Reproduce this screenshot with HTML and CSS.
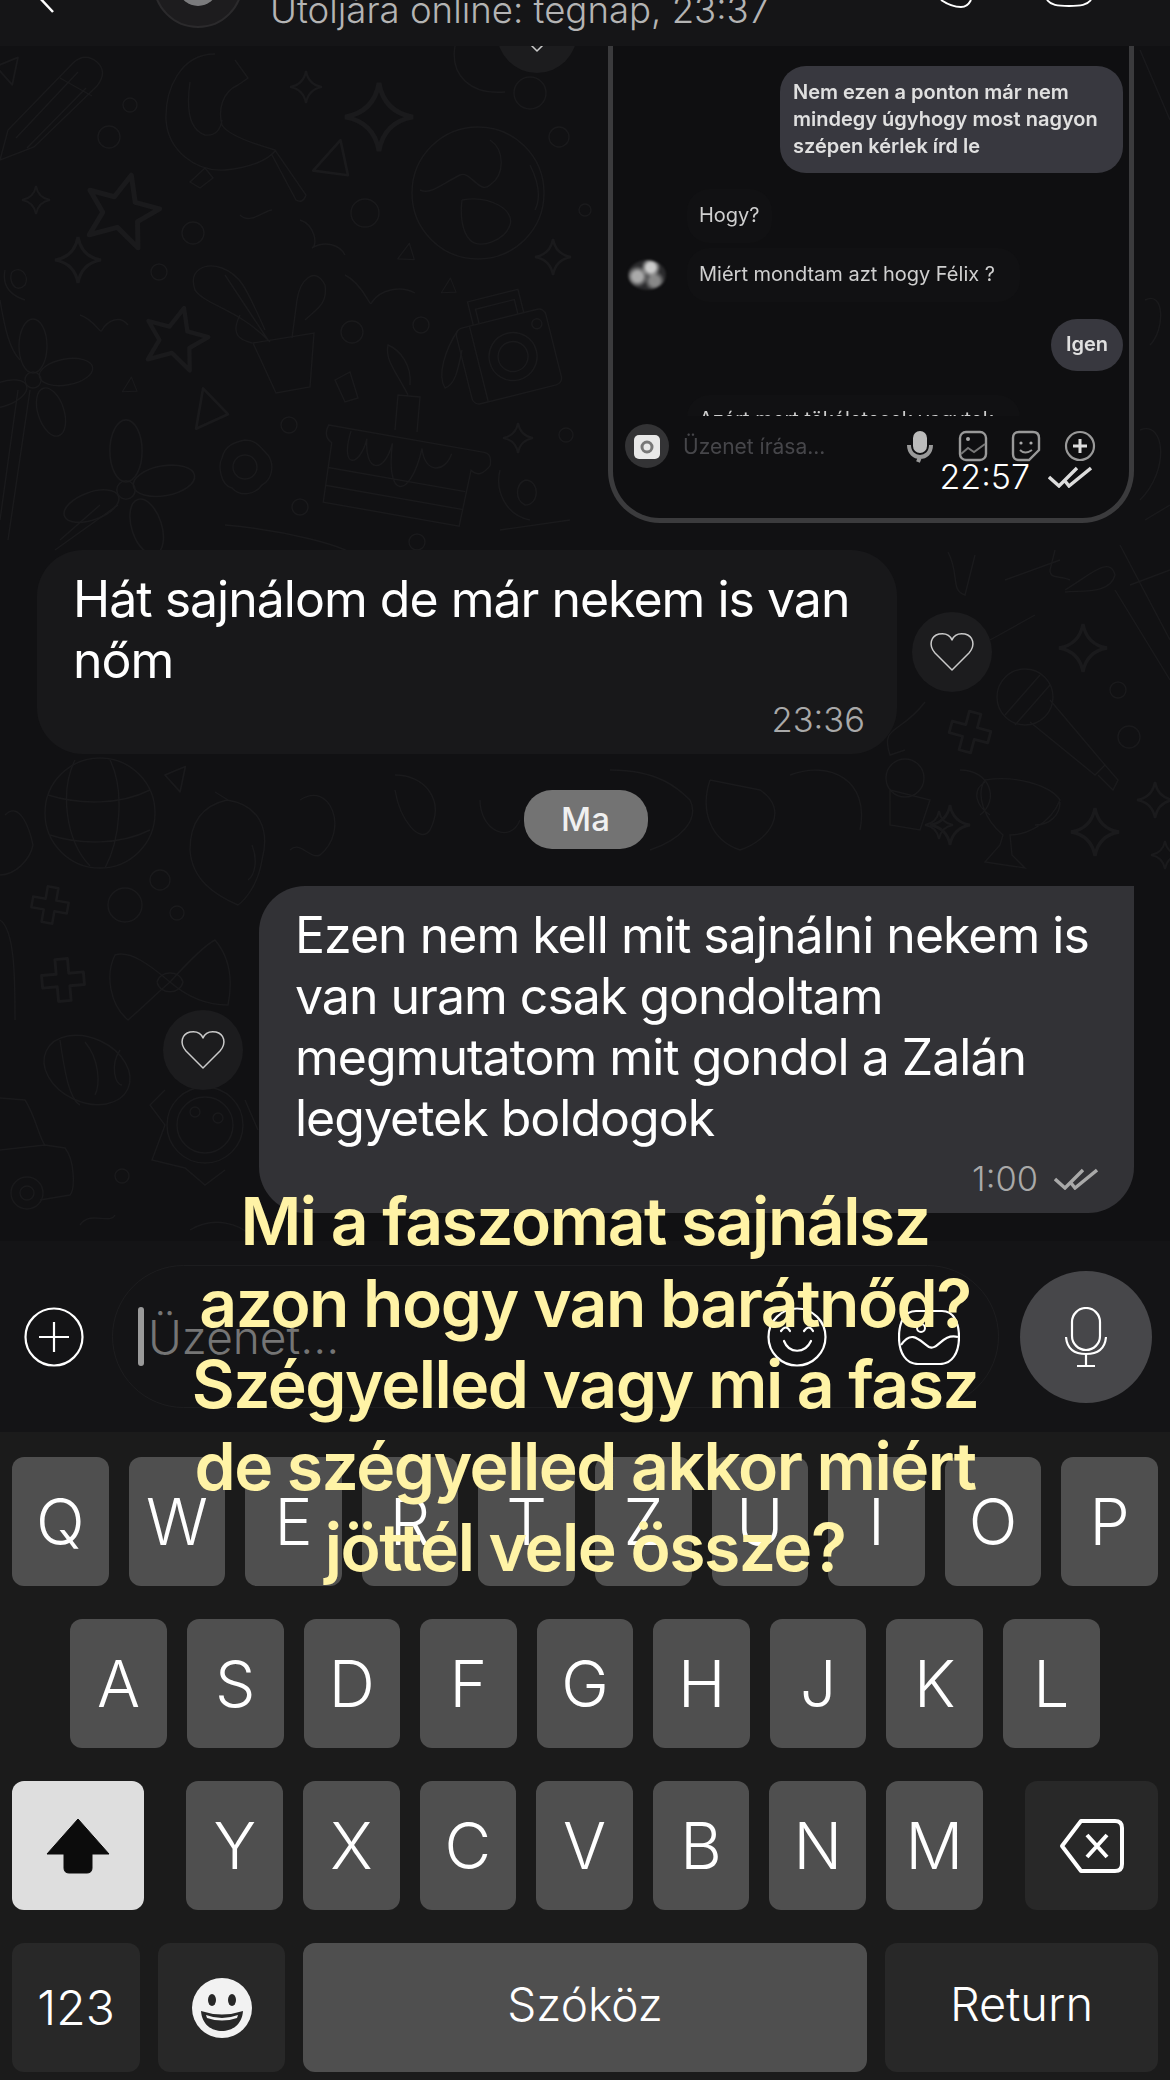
FILE: index.html
```html
<!DOCTYPE html>
<html lang="hu">
<head>
<meta charset="utf-8">
<title>Chat</title>
<link rel="stylesheet" href="styles.css">
</head>
<body>
<svg class="defs" width="0" height="0" aria-hidden="true">
  <symbol id="heart" viewBox="0 0 46 42"><path d="M23 39 L6 22 C-1 14 2 5 10 3 C16 2 21 4 23 9 C25 4 30 2 36 3 C44 5 47 14 40 22 Z" fill="none" stroke="currentColor" stroke-width="1.5" stroke-linejoin="round"/></symbol>
  <symbol id="checks" viewBox="0 0 44 22"><path d="M1 11 L11 20 L29 2 M17 15 L21 20 L43 2" fill="none" stroke="currentColor" stroke-width="3.4"/></symbol>
</svg>
<main class="phone">
  <header class="topbar">
    <svg class="back" width="30" height="14" viewBox="0 0 30 14"><path d="M8 -4 L23 12" fill="none" stroke="#fff" stroke-width="2.5"/></svg>
    <div class="avatar"><span class="avatar-head"></span></div>
    <div class="status">Utoljára online: tegnap, 23:37</div>
    <svg class="top-icon-a" width="36" height="10" viewBox="0 0 36 10"><path d="M2 0 C8 4 14 7 22 7 C27 7 30 4 32 0" fill="none" stroke="#fff" stroke-width="2"/></svg>
    <svg class="top-icon-b" width="48" height="8" viewBox="0 0 48 8"><path d="M2 0 C6 5 12 6 24 6 C36 6 42 5 46 0" fill="none" stroke="#fff" stroke-width="2"/></svg>
  </header>

  <section class="chat">
    <svg class="wallpaper" viewBox="0 46 1170 1195" width="1170" height="1195" aria-hidden="true">
      <defs>
        <path id="sp" d="M0 -10 Q1.5 -1.5 10 0 Q1.5 1.5 0 10 Q-1.5 1.5 -10 0 Q-1.5 -1.5 0 -10 Z"/>
        <path id="st" d="M0 -10 L3 -3 L10 -3 L5 2 L7 9 L0 5 L-7 9 L-5 2 L-10 -3 L-3 -3 Z" stroke-linejoin="round"/>
        <path id="tr" d="M-8 10 L0 -10 L10 6 Z" stroke-linejoin="round"/>
        <path id="pl" d="M-3 -10 L3 -10 L3 -3 L10 -3 L10 3 L3 3 L3 10 L-3 10 L-3 3 L-10 3 L-10 -3 L-3 -3 Z" stroke-linejoin="round"/>
        <g id="pw"><circle r="8"/><ellipse cx="0" cy="-34" rx="14" ry="27"/><ellipse cx="33" cy="-8" rx="27" ry="13" transform="rotate(-10 33 -8)"/><ellipse cx="18" cy="32" rx="13" ry="25" transform="rotate(-18 18 32)"/><ellipse cx="-30" cy="14" rx="25" ry="12" transform="rotate(-20 -30 14)"/></g>
      </defs>
      <g class="doodle">
        <path d="M0 160 L8 130 L73 63 Q85 52 97 62 Q108 72 97 86 L34 147 Z M16 138 L78 72 M60 78 L92 96 M27 148 L86 88"/>
        <path d="M215 54 C180 54 165 90 166 120 C168 150 195 172 225 170 C250 168 268 160 276 150 M235 60 L248 78 L238 85 C222 92 218 110 222 125 C226 132 240 140 275 150 L306 195 Q303 204 296 200 L272 155 M190 82 C186 110 190 130 205 135 C214 136 220 132 222 120"/>
        <path d="M190 182 L205 168 L213 178 L200 188 Z"/>
        <use href="#sp" transform="translate(306 87) scale(1.6)"/><use href="#sp" transform="translate(379 117) scale(3.4)"/><use href="#sp" transform="translate(36 200) scale(1.4)"/><use href="#sp" transform="translate(78 260) scale(2.3)"/><use href="#sp" transform="translate(553 257) scale(1.8)"/><use href="#sp" transform="translate(518 438) scale(1.5)"/>
        <circle cx="130" cy="105" r="7"/><circle cx="109" cy="137" r="11"/><circle cx="193" cy="233" r="11"/><circle cx="365" cy="213" r="14"/><circle cx="530" cy="93" r="16"/><circle cx="559" cy="137" r="10"/><circle cx="585" cy="210" r="6"/><circle cx="159" cy="272" r="8"/><circle cx="352" cy="332" r="11"/><circle cx="421" cy="325" r="8"/><circle cx="289" cy="425" r="8"/><circle cx="566" cy="435" r="7"/><circle cx="300" cy="507" r="8"/><circle cx="417" cy="542" r="8"/>
        <circle cx="478" cy="193" r="66"/>
        <path d="M420 190 C430 195 440 185 460 175 C470 170 480 195 490 185 C505 175 505 150 490 140 M462 200 C490 195 515 210 510 225 C505 240 480 250 470 240 C462 232 460 215 462 200 M530 165 C540 185 540 200 535 210"/>
        <path d="M455 46 C450 75 470 95 505 92"/>
        <use href="#st" transform="translate(122 210) rotate(15) scale(3.6)"/><use href="#st" transform="translate(176 338) rotate(15) scale(3.1)"/>
        <use href="#tr" transform="translate(334 158) rotate(20) scale(1.9)"/><use href="#tr" transform="translate(407 252) rotate(15) scale(.9)"/><use href="#tr" transform="translate(207 407) rotate(-12) scale(1.9)"/><use href="#tr" transform="translate(10 72) rotate(170) scale(1.3)"/><use href="#tr" transform="translate(130 385) rotate(10) scale(.8)"/><use href="#tr" transform="translate(449 286) rotate(10) scale(.8)"/>
        <path d="M253 343 L314 333 L310 387 L276 393 Z M270 342 C240 310 205 305 195 290 C188 270 205 262 222 268 C240 275 245 285 265 330 M292 338 L297 300 C300 280 315 265 325 285 C328 305 315 310 305 320 M225 275 L268 340 M240 315 C230 335 240 340 252 343"/>
        <path d="M240 215 C250 225 265 210 272 210 M300 220 C315 225 318 245 312 248 C325 240 340 245 345 255"/>
        <path d="M345 275 C365 285 370 310 372 302 C380 290 400 285 415 293 M80 315 C95 320 100 335 102 330 C108 320 120 315 128 325"/>
        <g transform="rotate(-14 507 357)"><rect x="463" y="318" width="92" height="78" rx="7"/><circle cx="513" cy="358" r="24"/><circle cx="513" cy="358" r="15"/><path d="M482 318 L482 294 L534 294 L534 318 M488 318 L488 303 L528 303 L528 318 M478 318 L478 396"/><circle cx="544" cy="332" r="5"/></g>
        <path d="M458 330 C445 350 437 375 445 388 C455 385 458 370 462 350"/>
        <use href="#pw" transform="translate(33 380)"/><path d="M30 390 L8 540 M18 390 L0 520"/>
        <use href="#pw" transform="translate(126 490) scale(1.15)"/><path d="M118 505 L55 550 M100 505 L60 540"/>
        <path d="M245 440 C258 440 262 450 268 455 C275 465 272 480 262 485 C255 495 240 497 232 488 C220 485 218 465 222 458 C225 445 235 442 245 440 Z"/><circle cx="245" cy="467" r="12"/>
        <g transform="rotate(10 400 470)"><path d="M322 438 L480 438 Q488 438 488 450 Q480 465 470 458 L468 515 L330 515 L328 455 Q318 450 322 438 Z M329 480 L468 480 M329 498 L468 498 M345 440 C340 480 360 475 362 445 C365 478 385 478 388 445 C390 500 415 500 418 445 C425 470 445 465 448 445"/></g>
        <path d="M395 430 L398 395 L420 397 L417 432 M408 395 C395 370 385 360 388 345 C400 350 412 365 410 385"/>
        <path d="M335 380 L350 372 L358 398 L345 402 Z"/>
        <path d="M500 470 C495 490 505 515 530 520 M525 480 C540 480 540 505 525 505 C515 500 515 485 525 480"/>
        <path d="M225 525 C280 530 350 545 360 560 M500 530 L570 520"/>
        <path d="M5 270 C2 285 10 295 25 300 M12 272 C20 265 30 275 25 285 C15 295 8 280 12 272"/>

        <circle cx="100" cy="813" r="55"/><path d="M48 795 C80 805 120 805 150 790 M50 835 C80 845 120 845 150 830 M75 760 C60 790 65 840 90 866 M110 760 C125 790 120 840 105 868"/>
        <path d="M227 800 C260 805 270 830 262 860 C258 885 245 900 238 905 C215 895 192 880 190 850 C190 820 205 805 227 800 M215 792 L228 800 M252 845 C258 860 255 875 248 880"/>
        <circle cx="125" cy="905" r="17"/><circle cx="160" cy="880" r="10"/><circle cx="177" cy="913" r="7"/>
        <use href="#pl" transform="translate(50 905) rotate(10) scale(1.8)"/><use href="#pl" transform="translate(63 980) rotate(-5) scale(2.1)"/>
        <use href="#tr" transform="translate(178 780) rotate(170) scale(1.2)"/>
        <path d="M170 982 C150 965 130 950 115 955 C105 975 110 1005 128 1020 C145 1005 155 995 170 982 C190 960 205 945 215 940 C232 960 232 985 228 1005 C205 1005 185 995 170 982 M157 982 C160 995 180 995 183 982 C180 970 160 970 157 982"/>
        <path d="M5 815 C20 800 30 830 33 845 C30 860 15 875 0 875 M0 920 C15 930 15 980 15 1020"/>
        <ellipse cx="87" cy="1070" rx="45" ry="32" transform="rotate(25 87 1070)"/><path d="M60 1040 C65 1075 70 1100 80 1105 M85 1042 C100 1060 100 1085 95 1095 M120 1050 C110 1065 115 1085 122 1085"/>
        <circle cx="205" cy="1125" r="38"/><circle cx="205" cy="1125" r="28"/><circle cx="195" cy="1112" r="5"/><circle cx="218" cy="1118" r="5"/><path d="M165 1090 L150 1105 L165 1125 L152 1160 L185 1168 L205 1185 L225 1170 M245 1100 L258 1130"/>
        <path d="M0 1098 L25 1100 C35 1115 40 1140 45 1145 L65 1148 C75 1160 75 1190 70 1195 L40 1200 M0 1150 L45 1145"/><circle cx="27" cy="1193" r="16"/><circle cx="27" cy="1193" r="7"/>
        <circle cx="122" cy="1176" r="7"/>
        <path d="M80 1225 C90 1210 110 1225 115 1215 M190 1230 C215 1215 240 1225 250 1235"/>

        <path d="M300 800 C330 780 350 830 320 855 C310 860 300 840 290 850 M395 775 C425 775 445 800 430 830 C420 845 400 820 395 790 M480 800 C480 830 510 845 520 820"/>
        <path d="M610 770 C660 770 680 790 690 800 C700 820 680 840 650 850 M710 780 L760 790 C790 810 770 840 740 850 C710 840 700 810 710 780 M790 775 C830 760 870 780 860 830 M890 790 L930 800 L920 830 L890 825 Z"/>
        <use href="#sp" transform="translate(950 825) scale(2)"/><path d="M960 770 C990 770 1000 800 980 815"/>

        <path d="M948 552 C960 575 950 590 965 595 L975 555 M1055 550 L1050 570 C1050 580 1060 575 1070 580 M1065 590 C1090 575 1110 555 1115 575 C1110 595 1080 590 1065 592 M1120 545 L1170 640 M1115 590 L1170 680 M1130 585 L1170 570"/>
        <path d="M1005 580 L1060 560 M990 640 L1035 615"/>
        <path d="M925 702 C900 735 880 725 890 755 L905 750"/>
        <use href="#sp" transform="translate(1083 648) scale(2.4)"/><use href="#sp" transform="translate(1095 832) scale(2.4)"/><use href="#sp" transform="translate(939 825) scale(1.4)"/><use href="#sp" transform="translate(1155 800) scale(1.8)"/><use href="#sp" transform="translate(1165 855) scale(1.4)"/>
        <circle cx="1025" cy="697" r="28"/><path d="M1005 715 L1040 675 M1015 725 L1050 685 M1030 722 L1095 775 L1105 765 L1050 700 M1098 775 L1113 790 L1118 780 L1105 765"/>
        <circle cx="1118" cy="690" r="8"/><circle cx="1129" cy="737" r="11"/><circle cx="905" cy="778" r="19"/>
        <use href="#pl" transform="translate(970 732) rotate(15) scale(2)"/>
        <path d="M985 780 C1015 775 1050 785 1060 800 C1050 825 1025 835 1010 835 L1012 855 L1025 868 L985 862 L1000 845 L1003 835 C985 820 975 795 985 780 M985 782 C972 790 975 805 990 815 M1060 802 C1060 815 1050 825 1035 825"/>
        <path d="M1140 50 L1170 120 M1145 300 C1165 290 1165 330 1150 345 M1140 430 C1165 420 1170 470 1140 500 M1145 520 L1170 505"/>
        <path d="M0 300 C5 330 10 350 20 360"/>
      </g>
    </svg>

    <div class="row row-right row-shot">
      <button class="react react-top"><svg width="46" height="42"><use href="#heart"/></svg></button>
      <div class="shot">
        <div class="in-bubble in-out in-long">Nem ezen a ponton már nem mindegy úgyhogy most nagyon szépen kérlek írd le</div>
        <div class="in-row in-first"><div class="in-bubble in-in">Hogy?</div></div>
        <div class="in-row in-second"><span class="in-avatar"></span><div class="in-bubble in-in in-flush">Miért mondtam azt hogy Félix ?</div></div>
        <div class="in-bubble in-out in-short">Igen</div>
        <div class="in-row in-crop"><div class="in-bubble in-in in-cut">Azért mert tökéletesek vagytok</div></div>
        <div class="in-compose">
          <span class="in-camera"><svg width="28" height="28" viewBox="0 0 28 28"><rect x="1" y="3" width="26" height="24" rx="5" fill="#e8e8e8"/><circle cx="14" cy="15" r="5" fill="none" stroke="#777" stroke-width="3"/></svg></span>
          <span class="in-placeholder">Üzenet írása...</span>
          <span class="in-icons">
            <svg width="30" height="34" viewBox="0 0 30 34"><rect x="8" y="2" width="14" height="22" rx="7" fill="#bbb"/><path d="M4 16 C4 32 26 32 26 16 M15 28 L13 33" fill="none" stroke="#999" stroke-width="4"/></svg>
            <svg width="30" height="32" viewBox="0 0 30 32"><rect x="2" y="2" width="26" height="28" rx="6" fill="none" stroke="#999" stroke-width="2.4"/><circle cx="10" cy="9" r="2" fill="#aaa"/><path d="M3 24 L10 18 L16 22 L27 14" fill="none" stroke="#777" stroke-width="2"/></svg>
            <svg width="30" height="32" viewBox="0 0 30 32"><path d="M8 2 L22 2 Q28 2 28 8 L28 20 L18 30 L8 30 Q2 30 2 24 L2 8 Q2 2 8 2 Z" fill="none" stroke="#999" stroke-width="2.4"/><circle cx="10" cy="13" r="1.6" fill="#aaa"/><circle cx="20" cy="13" r="1.6" fill="#aaa"/><path d="M9 20 Q14 25 21 20" fill="none" stroke="#999" stroke-width="2"/></svg>
            <svg width="32" height="32" viewBox="0 0 32 32"><circle cx="16" cy="16" r="14" fill="none" stroke="#999" stroke-width="2.2"/><path d="M16 9 L16 23 M9 16 L23 16" stroke="#ddd" stroke-width="3"/></svg>
          </span>
        </div>
        <div class="shot-meta"><span>22:57</span><svg class="shot-check" width="44" height="22"><use href="#checks"/></svg></div>
      </div>
    </div>

    <div class="row row-left row-first">
      <article class="bubble bubble-in">
        <p>Hát sajnálom de már nekem is van nőm</p>
        <div class="meta"><span>23:36</span></div>
      </article>
      <button class="react"><svg width="46" height="42"><use href="#heart"/></svg></button>
    </div>

    <div class="date"><span>Ma</span></div>

    <div class="row row-right row-last">
      <button class="react"><svg width="46" height="42"><use href="#heart"/></svg></button>
      <article class="bubble bubble-out">
        <p>Ezen nem kell mit sajnálni nekem is van uram csak gondoltam megmutatom mit gondol a Zalán legyetek boldogok</p>
        <div class="meta"><span>1:00</span><svg class="check" width="44" height="22"><use href="#checks"/></svg></div>
      </article>
    </div>
  </section>

  <section class="composer">
    <svg class="plus" width="60" height="60" viewBox="0 0 60 60"><circle cx="30" cy="30" r="28.5" fill="none" stroke="#fff" stroke-width="2.2"/><path d="M30 15 L30 45 M15 30 L45 30" stroke="#fff" stroke-width="2.2"/></svg>
    <div class="field">
      <span class="caret"></span>
      <span class="placeholder">Üzenet...</span>
      <svg class="smile" width="60" height="60" viewBox="0 0 60 60"><circle cx="30" cy="30" r="28.5" fill="none" stroke="#fff" stroke-width="2.2"/><path d="M14 24 Q19 17 23 24 M37 24 Q42 17 46 24 M17 34 C22 47 38 47 44 34" fill="none" stroke="#fff" stroke-width="2.2" stroke-linecap="round"/></svg>
      <svg class="sticker" width="62" height="56" viewBox="0 0 62 56"><path d="M18 2 L44 2 C56 2 61 14 61 28 C61 44 54 55 42 55 L20 55 C8 55 1 44 1 28 C1 14 6 2 18 2 Z" fill="none" stroke="#fff" stroke-width="2.2"/><path d="M3 36 C14 20 22 32 31 38 C40 42 44 24 60 28" fill="none" stroke="#fff" stroke-width="2.2"/><circle cx="23" cy="19" r="4" fill="none" stroke="#fff" stroke-width="2"/></svg>
    </div>
    <div class="mic">
      <svg width="42" height="60" viewBox="0 0 42 60"><rect x="7" y="1" width="28" height="42" rx="14" fill="none" stroke="#fff" stroke-width="2.2"/><path d="M1 30 C2 42 10 47 21 47 C32 47 40 42 41 30 M21 47 L21 59 M12 59 L30 59" fill="none" stroke="#fff" stroke-width="2.2"/></svg>
    </div>
  </section>

  <section class="keyboard">
    <div class="kb-row kb-top">
      <span class="key">Q</span><span class="key">W</span><span class="key">E</span><span class="key">R</span><span class="key">T</span><span class="key">Z</span><span class="key">U</span><span class="key">I</span><span class="key">O</span><span class="key">P</span>
    </div>
    <div class="kb-row kb-mid">
      <span class="key">A</span><span class="key">S</span><span class="key">D</span><span class="key">F</span><span class="key">G</span><span class="key">H</span><span class="key">J</span><span class="key">K</span><span class="key">L</span>
    </div>
    <div class="kb-row kb-third">
      <span class="key key-shift"><svg width="64" height="56" viewBox="0 0 64 56"><path d="M32 1 L63 36 L46 36 L46 50 Q46 55 41 55 L23 55 Q18 55 18 50 L18 36 L1 36 Z" fill="#0c0c0c" stroke="#0c0c0c" stroke-linejoin="round" stroke-width="1"/></svg></span>
      <div class="kb-group">
        <span class="key">Y</span><span class="key">X</span><span class="key">C</span><span class="key">V</span><span class="key">B</span><span class="key">N</span><span class="key">M</span>
      </div>
      <span class="key key-dark key-del"><svg width="66" height="56" viewBox="0 0 66 56"><path d="M22 3 L56 3 Q63 3 63 10 L63 46 Q63 53 56 53 L22 53 L3 28 Z" fill="none" stroke="#fff" stroke-width="4" stroke-linejoin="round"/><path d="M28 17 L48 39 M48 17 L28 39" stroke="#fff" stroke-width="4"/></svg></span>
    </div>
    <div class="kb-row kb-bottom">
      <span class="key key-dark key-num">123</span>
      <span class="key key-dark key-emoji"><svg width="60" height="60" viewBox="0 0 60 60"><circle cx="30" cy="30" r="30" fill="#f2f2f2"/><ellipse cx="20" cy="22" rx="4" ry="6" fill="#282828"/><ellipse cx="40" cy="22" rx="4" ry="6" fill="#282828"/><path d="M9 33 Q30 40 51 33 C50 47 40 53 30 53 C20 53 10 47 9 33 Z" fill="#282828"/><path d="M14 37 Q30 43 46 37 L45 40 Q30 45 15 40 Z" fill="#f2f2f2"/></svg></span>
      <span class="key key-space">Szóköz</span>
      <span class="key key-dark key-return">Return</span>
    </div>
  </section>

  <div class="caption">Mi a faszomat sajnálsz<br>azon hogy van barátnőd?<br>Szégyelled vagy mi a fasz<br>de szégyelled akkor miért<br>jöttél vele össze?</div>
</main>
</body>
</html>
```
FILE: styles.css
```css
* { box-sizing: border-box; }
html, body { margin: 0; padding: 0; background: #111113; }
body { font-family: Inter, "Noto Sans", "Liberation Sans", sans-serif; color: #fff; }
.defs { position: absolute; }
.phone { position: relative; width: 1170px; height: 2080px; overflow: hidden; display: flex; flex-direction: column; background: #111113; }

/* top bar */
.topbar { height: 46px; flex: none; display: flex; align-items: flex-start; background: #151517; position: relative; z-index: 2; }
.back { margin-left: 30px; flex: none; overflow: visible; }
.avatar { width: 90px; height: 90px; margin: -62px 0 0 93px; flex: none; border-radius: 50%; background: #1d1c1e; border: 2px solid #2b2a2c; display: flex; justify-content: center; align-items: flex-end; overflow: hidden; }
.avatar-head { width: 36px; height: 30px; margin-bottom: 20px; border-radius: 50%; background: #7b7b7d; }
.status { margin: -10px 0 0 27px; font-size: 36.6px; line-height: 40px; color: #b4b4b4; white-space: nowrap; font-weight: 300; }
.top-icon-a { margin-left: 170px; flex: none; }
.top-icon-b { margin-left: 70px; flex: none; }

/* chat */
.chat { position: relative; height: 1195px; flex: none; overflow: hidden; padding: 0 36px 0 37px; display: flex; flex-direction: column; }
.wallpaper { position: absolute; left: 0; top: 0; }
.doodle { fill: none; stroke: #1a1a1c; stroke-width: 1.4; }
.row { position: relative; display: flex; align-items: center; }
.row-right { justify-content: flex-end; }
.row-first { margin-top: 27px; gap: 15px; }
.row-last { margin-top: 37px; gap: 16px; }
.row-shot { align-items: flex-start; gap: 31px; }
.react { width: 80px; height: 80px; flex: none; border: 0; padding: 0; border-radius: 50%; background: #1c1c1e; color: #cacaca; display: flex; align-items: center; justify-content: center; }
.react-top { margin-top: -53px; }

.bubble p { margin: 0; font-size: 50px; line-height: 61px; font-weight: 400; letter-spacing: -1px; }
.bubble-in { width: 860px; height: 204px; padding: 19px 36px 0; border-radius: 46px; background: #18181a; }
.bubble-out { width: 875px; height: 327px; padding: 19px 36px 0; border-radius: 0 0 46px 46px; border-top-left-radius: 46px; background: #323236; }
.meta { display: flex; justify-content: flex-end; align-items: center; gap: 16px; font-size: 34.5px; line-height: 40px; color: #a9a9a9; font-weight: 300; }
.bubble-in .meta { margin: 9px -4px 0 0; }
.bubble-out .meta { margin: 10px 0 0 0; }
.check { color: #a9a9a9; }

/* screenshot inside the chat */
.shot { position: relative; width: 526px; height: 477px; padding: 20px 6px 0 15px; background: #0f0f11; border: 5px solid #3b3b3d; border-top: 0; border-radius: 0 0 52px 52px; display: flex; flex-direction: column; align-items: flex-start; }
.in-bubble { font-size: 20px; line-height: 27px; color: #cfcfcf; filter: blur(.6px); }
.in-out { align-self: flex-end; background: #38383f; color: #e0e0e0; font-weight: 600; border-radius: 26px; }
.in-long { width: 343px; height: 107px; padding: 13px 8px 0 13px; }
.in-short { width: 72px; height: 52px; margin-top: 17px; padding-top: 12px; text-align: center; }
.in-in { background: #111113; border-radius: 22px; padding: 13px 12px; height: 54px; white-space: nowrap; }
.in-flush { flex: none; width: 333px; }
.in-row { display: flex; align-items: center; gap: 21px; width: 100%; }
.in-first { padding-left: 59px; margin-top: 16px; }
.in-second { margin-top: 5px; }
.in-avatar { width: 38px; height: 30px; flex: none; border-radius: 50%; background: radial-gradient(circle at 60% 25%, #ccc 0 14%, transparent 30%), radial-gradient(circle at 25% 55%, #aaa 0 15%, transparent 32%), radial-gradient(circle at 70% 70%, #888 0 14%, transparent 30%), #2a2a2c; filter: blur(1px); }
.in-crop { padding-left: 59px; margin-top: 24px; height: 21px; overflow: hidden; align-items: flex-start; }
.in-cut { width: 333px; flex: none; padding-top: 11px; }
.in-compose { display: flex; align-items: center; width: 100%; margin-top: 8px; }
.in-camera { width: 44px; height: 44px; margin-left: -3px; flex: none; border-radius: 50%; background: #333335; display: flex; align-items: center; justify-content: center; }
.in-placeholder { margin-left: 14px; font-size: 21px; color: #46464a; white-space: nowrap; filter: blur(.5px); }
.in-icons { margin: 0 27px 0 auto; display: flex; align-items: center; gap: 23px; filter: blur(.5px); }
.shot-meta { position: absolute; right: 37px; bottom: 21px; display: flex; align-items: center; gap: 18px; font-size: 34px; line-height: 40px; font-weight: 300; }
.shot-check { color: #dcdcdc; }

.date { position: relative; display: flex; justify-content: center; margin-top: 36px; }
.date span { width: 124px; height: 59px; border-radius: 28px; background: #737373; color: #f0f0f0; font-size: 33px; line-height: 59px; text-align: center; font-weight: 500; }

/* composer */
.composer { height: 191px; flex: none; background: #141416; display: flex; align-items: center; padding: 0 18px 0 24px; position: relative; }
.plus { flex: none; margin-top: 1px; }
.field { width: 888px; height: 143px; margin-left: 28px; border: 1.5px solid #1d1d1f; border-radius: 72px; display: flex; align-items: center; padding-left: 25px; }
.caret { width: 6px; height: 59px; border-radius: 3px; background: #9a9a9a; flex: none; }
.placeholder { margin-left: 4px; font-size: 46px; color: #757575; font-weight: 300; width: 500px; flex: none; }
.smile { margin-left: 119px; flex: none; }
.sticker { margin-left: 71px; flex: none; }
.mic { width: 132px; height: 132px; margin-left: 21px; flex: none; border-radius: 50%; background: #47474a; display: flex; align-items: center; justify-content: center; }

/* keyboard */
.keyboard { flex: 1; background: #1b1b1b; padding: 25px 12px 0; display: flex; flex-direction: column; gap: 33px; }
.kb-row { display: flex; gap: 20px; }
.kb-mid { justify-content: center; }
.kb-third, .kb-bottom { justify-content: space-between; gap: 18px; }
.kb-group { display: flex; gap: 20px; }
.key { width: 96.6px; height: 129px; flex: none; border-radius: 12px; background: #4f4f4f; display: flex; align-items: center; justify-content: center; color: #fff; font-size: 64px; font-weight: 300; }
.key-dark { background: #282828; }
.key-shift { width: 132px; background: #dedede; }
.key-del { width: 133px; }
.key-num { width: 128px; font-size: 48px; }
.key-emoji { width: 127px; }
.key-space { width: 564px; font-size: 46px; padding-bottom: 8px; }
.key-return { width: 273px; font-size: 47px; padding-bottom: 8px; }

/* caption */
.caption { position: absolute; left: 0; right: 0; top: 1181px; z-index: 3; text-align: center; font-size: 66px; line-height: 81.5px; font-weight: 600; letter-spacing: -1.5px; color: #fff3a6; white-space: nowrap; }
```
